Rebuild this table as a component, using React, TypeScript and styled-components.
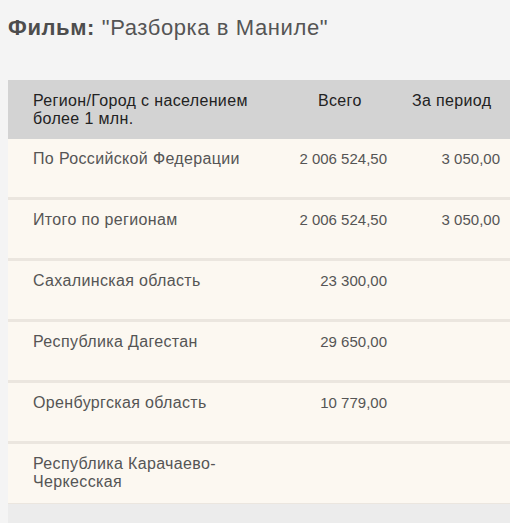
import React from "react";
import styled, { createGlobalStyle } from "styled-components";

const Global = createGlobalStyle`
  html, body { margin: 0; padding: 0; background: #f4f4f4; }
  body { font-family: "Liberation Sans", Arial, sans-serif; }
`;

const Page = styled.div`
  padding: 16px 0 0 8px;
  min-height: 523px;
  box-sizing: border-box;
  display: flex;
  flex-direction: column;
`;

const Title = styled.h1`
  margin: 0 0 40px;
  font-size: 22px;
  line-height: 24px;
  font-weight: normal;
  letter-spacing: 0.6px;
  color: #555;
  white-space: nowrap;
`;

const TitleLabel = styled.b`
  font-weight: bold;
  color: #4d4d4d;
`;

const Table = styled.div`
  display: flex;
  flex-direction: column;
`;

const Row = styled.div<{ $head?: boolean; $last?: boolean }>`
  display: grid;
  grid-template-columns: 282px 110px 110px;
  box-sizing: border-box;
  min-height: ${(p) => (p.$head ? 59 : p.$last ? 60 : 61)}px;
  background: ${(p) => (p.$head ? "#d3d3d3" : "#fcf8f1")};
  color: ${(p) => (p.$head ? "#222" : "#555")};
  padding: ${(p) => (p.$head ? "12px 0 8px" : "11px 0 12px")};
  border-bottom: ${(p) =>
    p.$head ? "none" : p.$last ? "1px solid #ebe6df" : "3px solid #ebe6df"};
  font-size: 16px;
  line-height: 18px;
`;

const NameCell = styled.div`
  padding-left: 25px;
  padding-right: 20px;
  letter-spacing: 0.35px;
`;

const HeadCell = styled.div<{ $pad: number }>`
  padding-left: ${(p) => p.$pad}px;
  white-space: nowrap;
  letter-spacing: 0.35px;
`;

const NumCell = styled.div<{ $pad: number }>`
  text-align: right;
  padding-right: ${(p) => p.$pad}px;
  font-size: 15px;
  white-space: nowrap;
`;

const Footer = styled.div`
  flex: 1;
  background: #ececec;
`;

const rows: [string, string, string][] = [
  ["По Российской Федерации", "2 006 524,50", "3 050,00"],
  ["Итого по регионам", "2 006 524,50", "3 050,00"],
  ["Сахалинская область", "23 300,00", ""],
  ["Республика Дагестан", "29 650,00", ""],
  ["Оренбургская область", "10 779,00", ""],
  ["Республика Карачаево-Черкесская", "", ""],
];

export default function App() {
  return (
    <>
      <Global />
      <Page>
        <Title>
          <TitleLabel>Фильм:</TitleLabel> "Разборка в Маниле"
        </Title>
        <Table>
          <Row $head>
            <NameCell>Регион/Город с населением более 1 млн.</NameCell>
            <HeadCell $pad={28}>Всего</HeadCell>
            <HeadCell $pad={12}>За период</HeadCell>
          </Row>
          {rows.map(([name, total, period], i) => (
            <Row key={i} $last={i === rows.length - 1}>
              <NameCell>{name}</NameCell>
              <NumCell $pad={13}>{total}</NumCell>
              <NumCell $pad={10}>{period}</NumCell>
            </Row>
          ))}
        </Table>
        <Footer />
      </Page>
    </>
  );
}
